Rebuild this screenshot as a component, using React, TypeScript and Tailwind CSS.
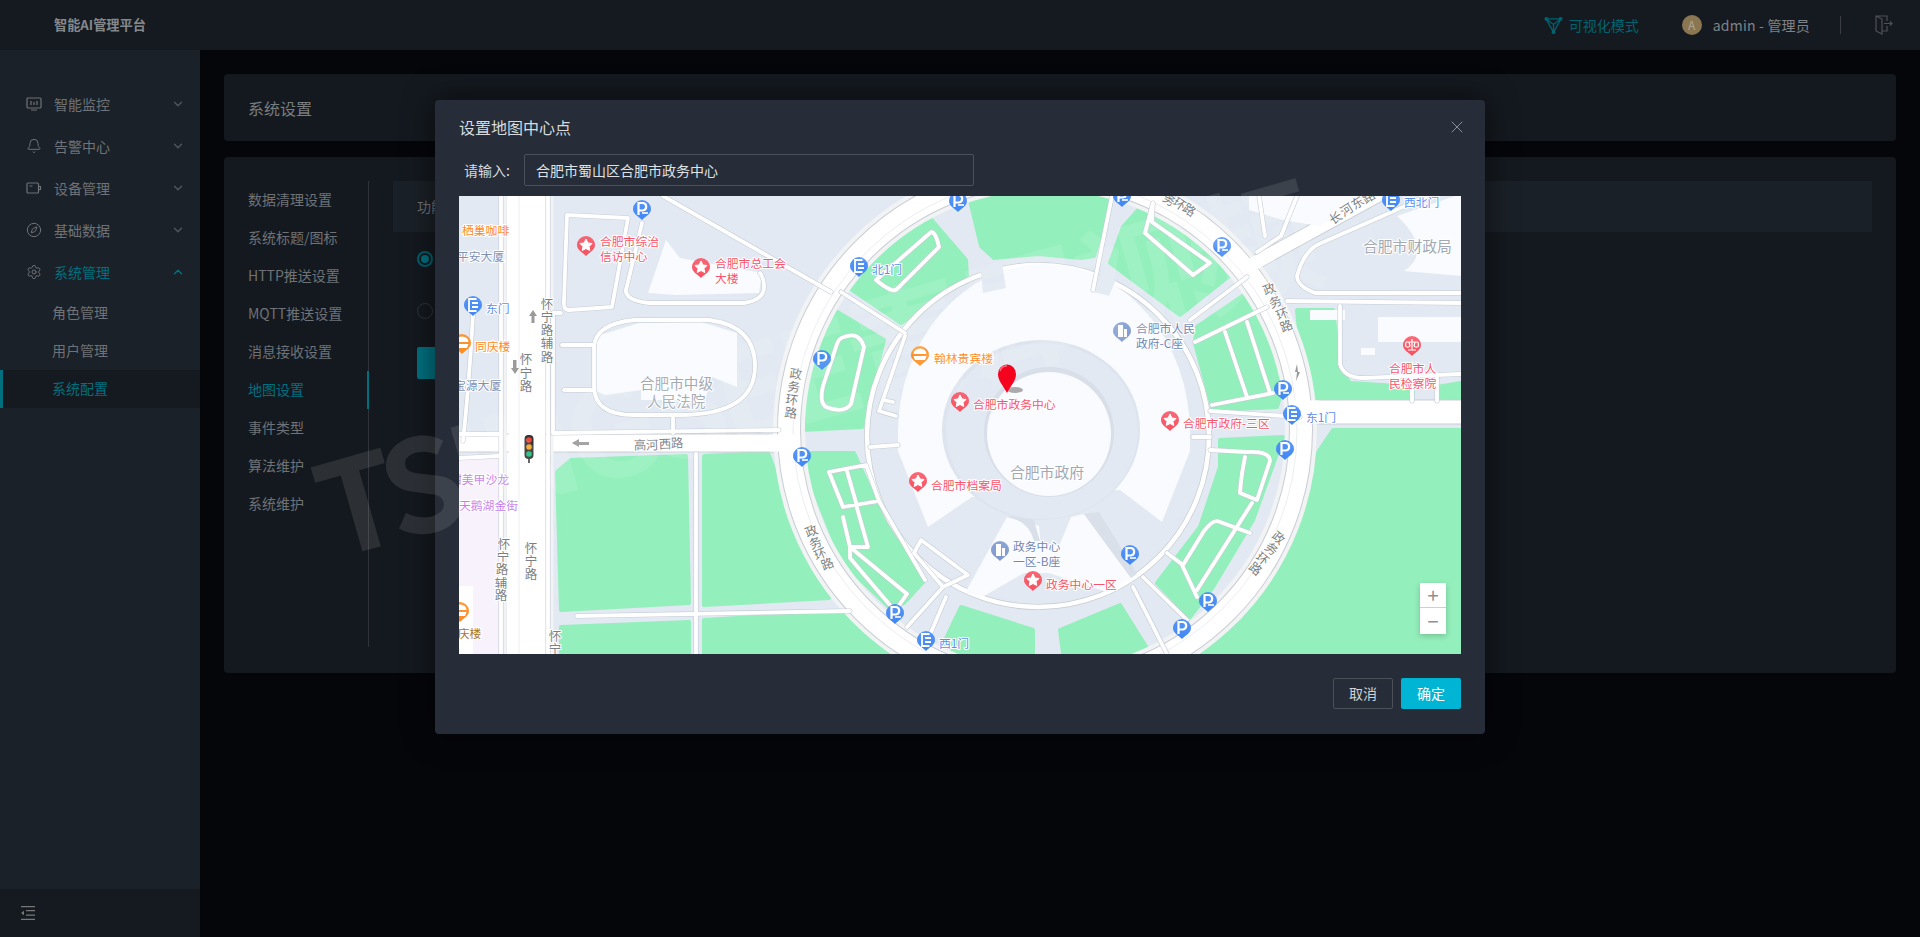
import React from "react";
import { Bell, ChevronDown, ChevronUp, Compass, Settings, X } from "lucide-react";

const GREEN = "#93efbb";
const BLOCK = "#e2e9f2";
const WHITE = "#f9fbff";

const greens: string[] = [
  "510,0 522,50 535,62 580,58 622,62 635,60 654,0",
  "688,4 754,44 774,77 721,119 651,67 664,31",
  "464,14 507,64 508,81 442,127 389,91 417,61",
  "375,114 425,144 403,231 342,234 350,191 360,144",
  "345,257 395,257 416,304 466,384 445,407 430,411 384,367 348,277",
  "761,244 824,241 811,277 794,324 754,391 731,421 698,387 741,331 761,271",
  "788,97 808,111 824,191 818,211 754,214 736,147 738,131",
  "661,409 691,457 604,457 601,434",
  "502,411 574,434 574,457 480,457",
  "98,276 112,264 227,260 230,407 102,414",
  "245,260 309,257 323,294 370,402 245,409",
  "102,431 230,426 230,457 102,457",
  "245,424 384,416 434,457 245,457",
  "874,234 1002,234 1002,458 741,458 784,424 831,354 854,264",
  "838,114 874,114 881,174 891,187 954,191 953,206 858,207 841,144",
  "978,191 1002,187 1002,204 978,206",
];

const whites: string[] = [
  "M189,97 L207,44 L221,62 L303,77 L300,97 L217,99 Z",
  "M135,141 L180,127 L242,126 L278,137 L278,191 L253,181 L246,204 L182,204 L182,194 L146,199 L135,194 Z",
  "M790,0 L920,0 L860,30 L824,24 L790,14 Z",
  "M938,20 L1002,-2 L1002,80 L945,75 Q975,55 938,20 Z",
  "M851,114 L886,114 L886,124 L851,124 Z",
  "M919,121 L1002,121 L1002,146 L919,146 Z",
  "M902,152 L916,152 L916,159 L902,159 Z",
];

const paths: string[] = [
  "M108,19 L169,22 L153,111 L110,114 Q104,114 105,105 Z",
  "M183,27 L168,90 Q162,104 190,107 L285,107 Q305,104 305,91 Q305,82 301,77",
  "M175,124 L250,124 Q296,130 296,170 Q296,219 220,219 L175,219 Q135,219 135,190 L135,150 Q137,128 175,124 Z",
  "M103,149 L135,149 M105,194 L135,194 M214,219 L214,237",
  "M94,117 L94,237 L320,234 M102,117 L94,117",
  "M237,258 L237,457 M118,420 L391,415",
  "M14,118 Q10,190 4,245 M42,0 L42,458 M89,0 L89,458 M0,238 L42,238 M0,262 L40,260",
  "M417,84 L471,37 Q476,33 480,51 L438,93 Q434,98 417,84 Z",
  "M385,141 Q400,135 405,151 L392,208 Q385,218 367,211 Q360,206 364,190 L378,148 Q380,142 385,141 Z",
  "M382,96 L446,137 M446,140 L420,215 L437,220 M424,204 L434,206 M411,251 L439,249",
  "M370,276 L407,269 L420,305 L384,311 Z M388,275 L398,310 M384,321 L391,351 L409,351 L398,312 M391,351 L448,398 L436,415 L391,362 Z M420,305 L466,384",
  "M462,344 L509,379 L484,391 L455,357 Z M484,391 L448,431 M487,401 L470,441",
  "M653,0 L634,94 M788,81 L731,124 M694,7 L686,37 L734,79 L751,67 L693,26 Z",
  "M736,146 L808,111 M766,136 L788,201 M788,126 L811,197 M753,209 L814,197 M751,215 L841,221 M734,241 L751,241",
  "M751,254 L788,256 Q811,255 811,265 L798,304 L781,297 Q782,280 786,261 M793,307 L738,394 M761,326 Q755,322 745,335 L724,369 L708,357 M761,326 L791,337 M723,369 L738,401 M684,381 L728,424 M674,391 L708,458",
  "M828,105 L1002,107 M881,110 L881,168 Q885,182 905,182 L1002,178 M953,182 L953,205 M978,182 L978,205",
  "M1002,97 L856,97 Q838,90 838,80 Q845,55 860,48 L944,11 L1002,-16",
  "M204,0 L372,96 M800,0 L806,40 M838,0 L822,40 L798,56",
];

type Glyph = "star" | "p" | "pr" | "e" | "food" | "b" | "law";
const PIN = { red: "#f8505f", blue: "#3f86f5", orange: "#ff8a1c", slate: "#7b97cf" } as const;

function Pin({ x, y, c, g }: { x: number; y: number; c: keyof typeof PIN; g: Glyph }) {
  const fill = `url(#grad-${c})`;
  return (
    <g transform={`translate(${x} ${y})`}>
      <path d="M-9,0 A9,9 0 1 1 9,0 C9,5 4,7 0,11 C-4,7 -9,5 -9,0 Z" fill={fill} />
      {g === "star" && <path d="M0,-6 L1.9,-2 L6,-1.5 L3,1.5 L3.8,5.5 L0,3.5 L-3.8,5.5 L-3,1.5 L-6,-1.5 L-1.9,-2 Z" fill="#fff" stroke="#fff" strokeLinejoin="round" />}
      {(g === "p" || g === "pr") && <path d="M-3.5,6 L-3.5,-6 L1,-6 A3.8,3.8 0 0 1 1,1.5 L-3.5,1.5" fill="none" stroke="#fff" strokeWidth="2.2" />}
      {g === "pr" && <path d="M0,4 L6,4" stroke="#fff" strokeWidth="1.6" />}
      {g === "e" && <path d="M3.5,-6 L-4,-6 L-4,6 L3.5,6 M-1,-2 L5,-2 M-1,2 L5,2" fill="none" stroke="#fff" strokeWidth="1.8" />}
      {g === "food" && <path d="M-6.5,-1 A6.5,5.5 0 0 1 6.5,-1 Z M-6.5,1 L6.5,1 L5,5 L-5,5 Z" fill="#fff" />}
      {g === "b" && <path d="M-4,6 L-4,-6 L1,-6 L1,6 Z M2,-2 L5,-2 L5,6 L2,6 Z" fill="#fff" />}
      {g === "law" && <path d="M0,-6 L0,5 M-4,5 L4,5 M-6,-3 L6,-3 M-6,-3 L-6.5,1 A2.5,2 0 0 0 -2,1 L-3,-3 M6,-3 L6.5,1 A2.5,2 0 0 1 2,1 L3,-3" fill="none" stroke="#fff" strokeWidth="1.2" />}
    </g>
  );
}

const pins: [number, number, keyof typeof PIN, Glyph][] = [
  [127, 49, "red", "star"], [242, 71, "red", "star"], [501, 205, "red", "star"], [711, 224, "red", "star"],
  [459, 285, "red", "star"], [574, 384, "red", "star"], [953, 149, "red", "law"],
  [183, 13, "blue", "pr"], [499, 5, "blue", "pr"], [363, 163, "blue", "p"], [343, 260, "blue", "pr"],
  [663, 0, "blue", "pr"], [763, 50, "blue", "pr"], [824, 193, "blue", "pr"], [826, 253, "blue", "p"],
  [671, 358, "blue", "pr"], [749, 405, "blue", "pr"], [723, 432, "blue", "p"], [436, 417, "blue", "pr"],
  [400, 70, "blue", "e"], [14, 109, "blue", "e"], [833, 218, "blue", "e"], [932, 4, "blue", "e"], [467, 444, "blue", "e"],
  [461, 159, "orange", "food"], [3, 147, "orange", "food"], [1, 415, "orange", "food"],
  [663, 135, "slate", "b"], [541, 354, "slate", "b"],
];

const labels: [string, number, number, string, number?][] = [
  ["合肥市综治", 141, 44, "#f8556a"], ["信访中心", 141, 59, "#f8556a"],
  ["合肥市总工会", 256, 66, "#f8556a"], ["大楼", 256, 81, "#f8556a"],
  ["合肥市政务中心", 514, 207, "#f8556a"], ["合肥市政府-三区", 724, 226, "#f8556a"],
  ["合肥市档案局", 472, 288, "#f8556a"], ["政务中心一区", 587, 387, "#f8556a"],
  ["北1门", 413, 72, "#5c8ff0"], ["东门", 27, 111, "#5c8ff0"], ["东1门", 847, 220, "#5c8ff0"], ["西北门", 945, 5, "#5c8ff0"], ["西1门", 480, 446, "#5c8ff0"],
  ["翰林贵宾楼", 475, 161, "#ff8a1c"], ["同庆楼", 16, 149, "#ff8a1c"], ["栖巢咖啡", 3, 33, "#ff8a1c"], ["同庆楼", -13, 436, "#a9762b"],
  ["平安大厦", -2, 59, "#7f90b3"], ["宝源大厦", -5, 188, "#7f90b3"],
  ["合肥市人民", 677, 131, "#6f86b5"], ["政府-C座", 677, 146, "#6f86b5"], ["政务中心", 554, 349, "#6f86b5"], ["一区-B座", 554, 364, "#6f86b5"],
  ["甜美甲沙龙", -9, 282, "#c27be8"], ["天鹅湖金街", 0, 308, "#c27be8"],
  ["合肥市中级", 181, 186, "#a2a9b3", 14.6], ["人民法院", 188, 204, "#a2a9b3", 14.6],
  ["合肥市财政局", 904, 49, "#a2a9b3", 14.8], ["合肥市政府", 551, 275, "#a2a9b3", 14.8],
  ["合肥市人", 930, 171, "#f8556a"], ["民检察院", 930, 186, "#f8556a"],
];

const roadChars: [string, number, number, number][] = [
  ["怀", 88, 107, 0], ["宁", 88, 120, 0], ["路", 88, 133, 0], ["辅", 88, 146, 0], ["路", 88, 160, 0],
  ["怀", 67, 162, 0], ["宁", 67, 176, 0], ["路", 67, 189, 0],
  ["怀", 45, 347, 0], ["宁", 44, 360, 0], ["路", 43, 372, 0], ["辅", 42, 386, 0], ["路", 42, 398, 0],
  ["怀", 72, 351, 0], ["宁", 72, 364, 0], ["路", 72, 377, 0], ["怀", 96, 439, 0], ["宁", 96, 452, 0],
  ["高", 181, 248, -2], ["河", 193, 248, -2], ["西", 206, 247, -2], ["路", 218, 246, -2],
  ["政", 337, 177, 8], ["务", 335, 190, 8], ["环", 333, 203, 8], ["路", 332, 216, 8],
  ["政", 352, 334, -22], ["务", 356, 346, -22], ["环", 361, 357, -22], ["路", 368, 367, -22],
  ["务", 711, 3, 35], ["环", 721, 7, 35], ["路", 731, 13, 35],
  ["政", 810, 92, -22], ["务", 816, 105, -22], ["环", 823, 117, -22], ["路", 827, 129, -22],
  ["政", 820, 341, 40], ["务", 813, 352, 40], ["环", 804, 362, 40], ["路", 797, 372, 40],
  ["长", 876, 21, -33], ["河", 887, 13, -33], ["东", 898, 6, -33], ["路", 909, 0, -33],
];

function MapCanvas() {
  return (
    <svg viewBox="0 0 1002 458" className="block h-full w-full">
      <defs>
        {Object.entries(PIN).map(([k, v]) => (
          <linearGradient key={k} id={`grad-${k}`} x1="0" y1="0" x2="0" y2="1">
            <stop offset="0" stopColor={v} stopOpacity="0.85" />
            <stop offset="1" stopColor={v} />
          </linearGradient>
        ))}
      </defs>
      <rect width="1002" height="458" fill={BLOCK} />
      <rect x="0" y="262" width="46" height="196" fill="#f7f2fb" />
      <rect x="0" y="390" width="14" height="68" fill="#ffffff" />
      {greens.map((p) => (
        <polygon key={p} points={p} fill={GREEN} stroke={GREEN} strokeWidth="4" strokeLinejoin="round" />
      ))}
      {/* main roads */}
      <g fill="none">
        <path d="M68,-5 L68,463" stroke="#fff" strokeWidth="40" />
        <path d="M0,247 L330,247" stroke="#c9cdd3" strokeWidth="19" />
        <path d="M0,247 L330,247" stroke="#fff" strokeWidth="17" />
        <path d="M68,-5 L68,463" stroke="#fff" strokeWidth="36" />
        <path d="M60,-5 L60,463" stroke="#eceef1" strokeWidth="1" />
        <path d="M835,216 L1002,216" stroke="#c9cdd3" strokeWidth="25" />
        <path d="M835,216 L1002,216" stroke="#fff" strokeWidth="23" />
        <path d="M790,70 L925,-4" stroke="#c9cdd3" strokeWidth="15" />
        <path d="M790,70 L925,-4" stroke="#fff" strokeWidth="13" />
        <path d="M45,0 L45,458 M92,0 L92,458" stroke="#f2f3f5" strokeWidth="5" />
        <circle cx="586" cy="234" r="256" stroke="#f2f3f5" strokeWidth="32" />
        <circle cx="586" cy="234" r="256" stroke="#c9cdd3" strokeWidth="24" />
        <circle cx="586" cy="234" r="256" stroke="#fff" strokeWidth="22" />
        <circle cx="586" cy="234" r="252" stroke="#eceef1" strokeWidth="1" />
        <path d="M835,216 L860,216" stroke="#fff" strokeWidth="23" />
        <path d="M310,247 L340,247" stroke="#fff" strokeWidth="17" />
        <path d="M785,73 L812,58" stroke="#fff" strokeWidth="13" />
      </g>
      {/* plaza */}
      <circle cx="579" cy="240" r="171" fill="none" stroke="#c9cdd3" strokeWidth="6" />
      <circle cx="579" cy="240" r="171" fill="none" stroke="#fff" strokeWidth="4.5" />
      <path d="M439,237 A146,169 0 0 1 731,237 L731,255 L703,326 L661,294 L513,301 L469,331 L439,255 Z" fill={WHITE} />
      <path d="M548,321 L580,330 L582,350 L600,350 L612,321 L625,318 L672,382 L648,396 L590,377 L565,377 L525,400 L506,397 Z" fill={WHITE} />
      <path d="M625,318 L640,316 L678,378 L672,382 Z" fill="#d9e0ea" />
      <path d="M548,321 L573,318 L581,345 L575,345 Q570,325 548,321 Z" fill="#d9e0ea" />
      <path d="M521,70 L543,68 L547,92 L524,97 Z M636,72 L660,76 L650,100 L634,96 Z" fill={BLOCK} />
      <ellipse cx="582" cy="234" rx="99" ry="90" fill="#dde4ee" />
      <ellipse cx="583" cy="235" rx="96" ry="88" fill={BLOCK} />
      <circle cx="590" cy="236" r="65" fill="#d8dfe9" />
      <circle cx="590" cy="238" r="62" fill={WHITE} />
      {whites.map((p) => (
        <path key={p} d={p} fill={WHITE} />
      ))}
      {/* lanes */}
      <g fill="none" strokeLinejoin="round" strokeLinecap="round">
        {paths.map((d) => (
          <path key={d} d={d} stroke="#c6ccd5" strokeWidth="5" />
        ))}
        {paths.map((d) => (
          <path key={d} d={d} stroke="#fff" strokeWidth="3.8" />
        ))}
      </g>
      {/* arrows */}
      <g fill="#9a9a9a">
        <path d="M74,114 L78,120 L75.5,120 L75.5,127 L72.5,127 L72.5,120 L70,120 Z" />
        <path d="M54,164 L57.5,164 L57.5,172 L60,172 L56,178 L52,172 L54,172 Z" />
        <path d="M113,247 L120,243 L120,246 L130,246 L130,249 L120,249 L120,251 Z" />
        <path d="M838,168 L836,176 L838,176 L837,185 L841,176 L839,176 Z" />
      </g>
      {/* traffic light */}
      <g transform="translate(70 251)">
        <rect x="-4.5" y="-12" width="9" height="24" rx="4" fill="#333" />
        <rect x="-1" y="12" width="2" height="4" fill="#555" />
        <circle cy="-7" r="2.8" fill="#f0453a" />
        <circle cy="0" r="2.8" fill="#f5a623" />
        <circle cy="7" r="2.8" fill="#18c07a" />
      </g>
      {/* labels */}
      <g style={{ fontFamily: "'Noto Sans CJK SC', sans-serif" }}>
        {roadChars.map(([t, x, y, r], i) => (
          <text key={i} x={x} y={y} transform={`rotate(${r} ${x} ${y})`} textAnchor="middle" dominantBaseline="central" fontSize="12.5" fill="#7c7f83" stroke="#fff" strokeWidth="2" paintOrder="stroke">{t}</text>
        ))}
        {labels.map(([t, x, y, c, s], i) => (
          <text key={i} x={x} y={y} dominantBaseline="central" fontSize={s ?? 11.8} fill={c} stroke="#fff" strokeWidth="2" paintOrder="stroke" letterSpacing="0">{t}</text>
        ))}
      </g>
      {pins.map(([x, y, c, g], i) => (
        <Pin key={i} x={x} y={y} c={c} g={g} />
      ))}
      {/* centre marker */}
      <ellipse cx="556" cy="194" rx="8" ry="3" fill="#777" opacity="0.6" />
      <path d="M548,197 C544,189 539,185 539,178 A9,9.5 0 1 1 557,178 C557,185 552,189 548,197 Z" fill="#f5021f" />
      <path d="M541,175 A7,7 0 0 1 548,170" stroke="#ff6a78" strokeWidth="1.5" fill="none" />
    </svg>
  );
}

const menu: { label: string; icon: React.ReactNode; open?: boolean }[] = [
  {
    label: "智能监控",
    icon: (
      <svg viewBox="0 0 16 16" className="h-4 w-4" fill="none" stroke="currentColor" strokeWidth="1.2">
        <rect x="1" y="2" width="14" height="10" rx="1" />
        <path d="M5 5v4M8 6v3M11 5v4M5 14h6" />
      </svg>
    ),
  },
  { label: "告警中心", icon: <Bell className="h-4 w-4" strokeWidth={1.5} /> },
  {
    label: "设备管理",
    icon: (
      <svg viewBox="0 0 16 16" className="h-4 w-4" fill="none" stroke="currentColor" strokeWidth="1.2">
        <rect x="1" y="3" width="11.5" height="10" rx="1" />
        <path d="M3.5 6h3M12.5 6.5h2v3h-2" />
      </svg>
    ),
  },
  { label: "基础数据", icon: <Compass className="h-4 w-4" strokeWidth={1.5} /> },
  { label: "系统管理", icon: <Settings className="h-4 w-4" strokeWidth={1.5} />, open: true },
];

const sub = ["角色管理", "用户管理", "系统配置"];
const settings = ["数据清理设置", "系统标题/图标", "HTTP推送设置", "MQTT推送设置", "消息接收设置", "地图设置", "事件类型", "算法维护", "系统维护"];

export default function App() {
  return (
    <div className="relative flex h-[937px] w-[1920px] flex-col overflow-hidden bg-[#05060a] [font-family:'Noto_Sans_CJK_SC',sans-serif] text-[14px] text-[#6f7276]">
      <header className="flex h-[50px] shrink-0 items-center bg-[#151a21] pl-[54px]">
        <div className="text-[13.2px] font-bold text-[#85888b]">智能AI管理平台</div>
        <div className="ml-auto flex items-center">
          <svg viewBox="0 0 20 20" className="h-[19px] w-[19px] text-[#00636f]" fill="none" stroke="currentColor" strokeWidth="1.3">
            <path d="M2 3 L18 3 L10 17 Z M2 3 L10 9 L18 3 M10 9 L10 17" />
            <circle cx="2.5" cy="3" r="1.4" fill="currentColor" />
            <circle cx="17.5" cy="3" r="1.4" fill="currentColor" />
            <circle cx="10" cy="17" r="1.4" fill="currentColor" />
          </svg>
          <span className="ml-[6px] text-[#00636f]">可视化模式</span>
          <span className="ml-[43px] flex h-5 w-5 items-center justify-center rounded-full bg-[#8a7650] text-[12px] text-[#b0a994]">A</span>
          <span className="ml-[11px] tracking-[0.2px] text-[#7f8388]">admin - 管理员</span>
          <span className="ml-[30px] h-[18px] w-px bg-[#3a3e44]" />
          <svg viewBox="0 0 18 20" className="ml-[34px] mr-[27px] h-5 w-[18px] text-[#4e5156]" fill="none" stroke="currentColor" strokeWidth="1.2">
            <path d="M12 6 V1 H1 V16 L7 19 V4 L1 1 M7 16 H12 V11 M9 8.5 H17 M15 6.5 L17 8.5 L15 10.5" />
          </svg>
        </div>
      </header>
      <div className="flex min-h-0 flex-1">
        <aside className="flex w-[200px] shrink-0 flex-col bg-[#1a2129]">
          <nav className="flex-1 pt-[34px]">
            {menu.map((m) => (
              <div key={m.label} className={`flex h-[42px] items-center pb-[2px] pl-[26px] pr-[15px] ${m.open ? "text-[#00707f]" : ""}`}>
                <span className="flex w-[28px] text-[#6f7276]">{m.icon}</span>
                <span>{m.label}</span>
                {m.open ? <ChevronUp className="ml-auto h-[14px] w-[14px]" strokeWidth={2.5} /> : <ChevronDown className="ml-auto h-[14px] w-[14px] text-[#4f555c]" strokeWidth={2.5} />}
              </div>
            ))}
            {sub.map((s, i) => (
              <div key={s} className={i === 2 ? "flex h-[38px] items-center border-l-[3px] border-[#00707f] bg-[#151a21] pb-[2px] pl-[49px] text-[#00707f]" : "flex h-[38px] items-center pb-[2px] pl-[52px]"}>
                {s}
              </div>
            ))}
          </nav>
          <div className="flex h-[48px] items-center bg-[#151a21] pl-[21px]">
            <svg viewBox="0 0 14 14" className="h-[14px] w-[14px] text-[#777]" fill="currentColor">
              <path d="M0 0h14v1.3H0zM5 4h9v1.3H5zM5 8.5h9v1.3H5zM0 12.7h14V14H0zM0 7l3-2.2v4.4z" />
            </svg>
          </div>
        </aside>
        <main className="flex min-w-0 flex-1 flex-col gap-4 px-6 pt-6">
          <div className="flex h-[67px] items-center rounded bg-[#14191f] pl-6 text-[16px] text-[#7a7d80]">系统设置</div>
          <div className="flex h-[516px] rounded bg-[#14191f] pb-[26px] pr-6 pt-6 ">
            <div className="w-[145px] shrink-0 border-r border-[#2f3339]">
              {settings.map((s, i) => (
                <div key={s} className={`relative flex h-[38px] items-center pb-[2px] pl-6 ${i === 5 ? "text-[#00707f]" : ""}`}>
                  {s}
                  {i === 5 && <span className="absolute -right-px top-0 h-[38px] w-[2px] bg-[#00707f]" />}
                </div>
              ))}
            </div>
            <div className="ml-6 flex-1">
              <div className="flex h-[51px] items-center bg-[#1a2027] pl-6">功能</div>
              <div className="ml-6 mt-[19px] flex h-4 w-4 items-center justify-center rounded-full border-2 border-[#00606d]">
                <span className="h-2 w-2 rounded-full bg-[#00707f]" />
              </div>
              <div className="ml-6 mt-9 h-4 w-4 rounded-full border border-[#2f3339]" />
              <div className="ml-6 mt-[28px] h-8 w-[90px] rounded-[2px] bg-[#00707f]" />
            </div>
          </div>
        </main>
      </div>

      {/* dialog */}
      <div className="absolute inset-0 flex justify-center pt-[100px]">
        <div className="flex h-[634px] w-[1050px] flex-col rounded bg-[#262d38] px-6 shadow-[0_0_30px_rgba(0,0,0,0.55)]">
          <div className="flex h-[54px] items-center justify-between text-[16px] text-[#d8dadd]">
            <span>设置地图中心点</span>
            <X className="-mr-[6px] h-5 w-5 text-[#8a8f96]" strokeWidth={1.2} />
          </div>
          <div className="flex h-8 items-center">
            <span className="w-[65px] pl-[5px] text-[14px] text-[#d8dadd]">请输入:</span>
            <div className="flex h-8 w-[450px] items-center rounded-[2px] border border-[#4a515c] pl-[11px] text-[14px] text-[#dfe1e4]">合肥市蜀山区合肥市政务中心</div>
          </div>
          <div className="relative mt-[10px] h-[458px] overflow-hidden">
            <MapCanvas />
            <div className="absolute bottom-[20px] right-[15px] flex w-[26px] flex-col bg-white text-[#8f8f8f] shadow-[0_2px_6px_rgba(0,0,0,0.2)]">
              <div className="flex h-[25px] items-center justify-center border-b border-[#cfcfcf] text-[20px] leading-none">+</div>
              <div className="flex h-[26px] items-center justify-center text-[20px] leading-none">−</div>
            </div>
          </div>
          <div className="flex justify-end gap-2 pt-6 text-[14px]">
            <button className="h-[31px] w-[60px] rounded-[2px] border border-[#4a4f58] text-[#d0d2d4]">取消</button>
            <button className="h-[31px] w-[60px] rounded-[2px] bg-[#00b5d4] text-white">确定</button>
          </div>
        </div>
      </div>

      {/* watermark */}
      <div className="pointer-events-none absolute left-[318px] top-[443px] origin-left -rotate-[16deg] whitespace-nowrap text-[128px] font-bold leading-none tracking-[-9px] text-white/10">
        TSINGSEE青犀视频
      </div>
    </div>
  );
}
